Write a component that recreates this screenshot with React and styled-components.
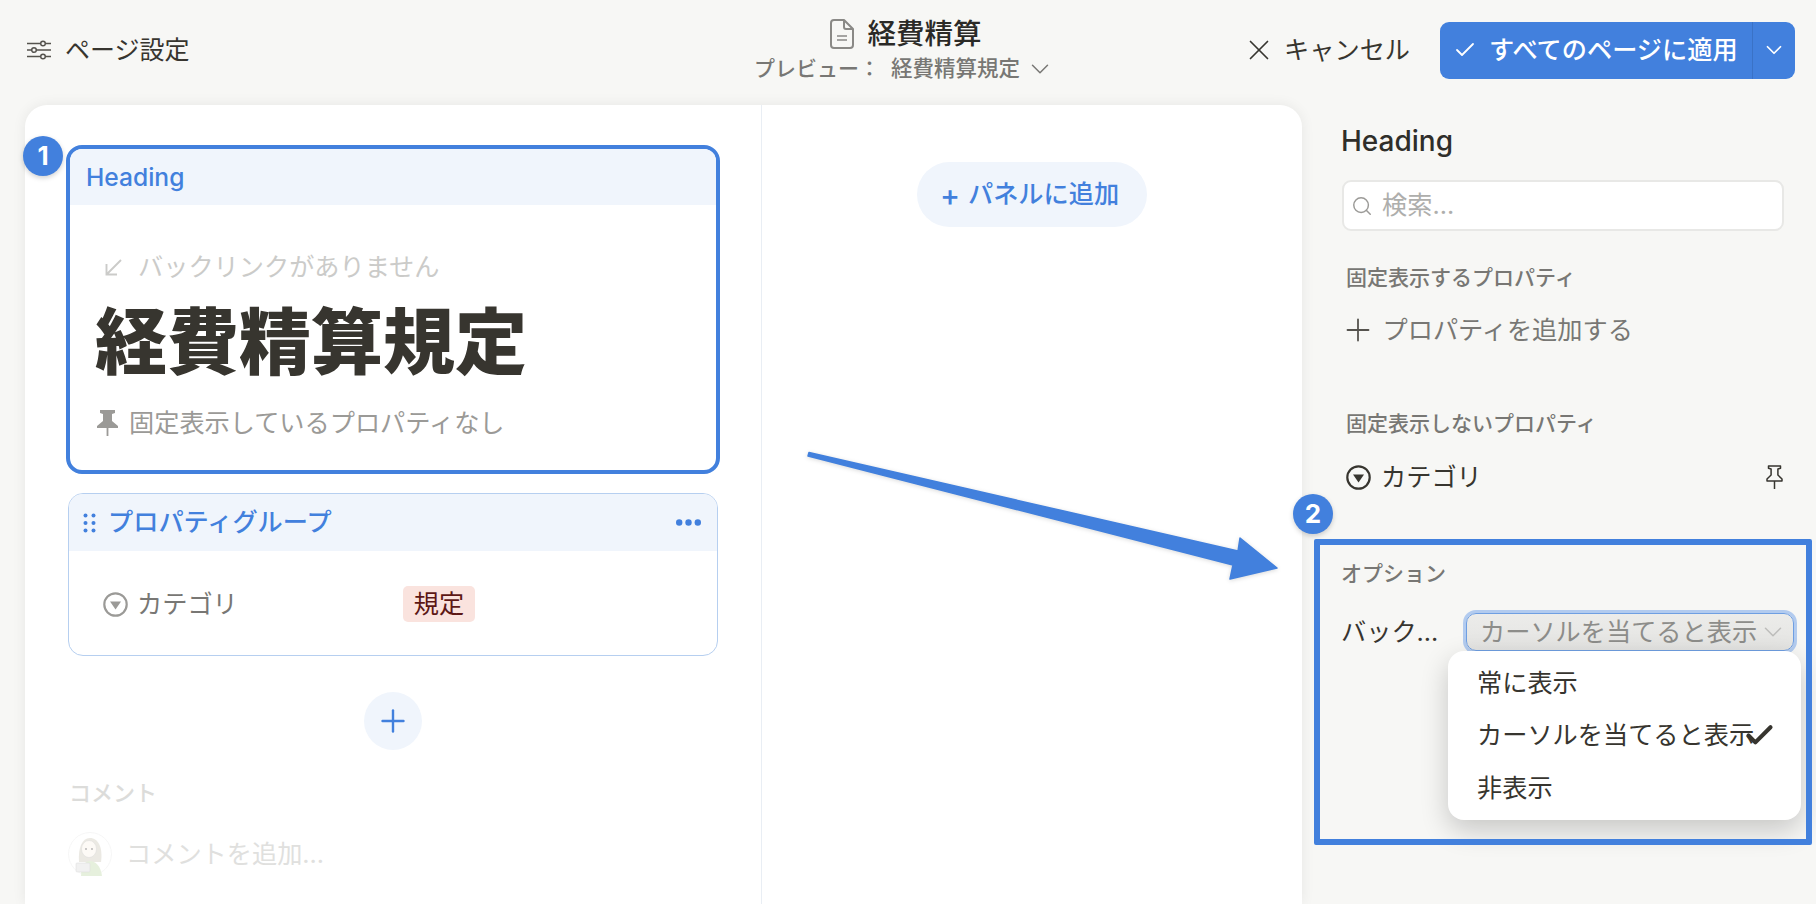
import React from "react";
import styled, { createGlobalStyle } from "styled-components";
import { X, Check, ChevronDown, Plus, Search } from "lucide-react";

const BLUE = "#4280dd";
const INK = "#37352f";
const FONT = `Inter, "Noto Sans CJK JP", "Noto Sans", sans-serif`;

const Global = createGlobalStyle`
  html, body { margin: 0; padding: 0; background: #f7f7f5; }
  body { font-family: ${FONT}; color: ${INK}; font-size: 25.2px; line-height: 1.3; overflow: hidden; }
  * { box-sizing: border-box; }
`;

const Page = styled.div`
  position: relative;
  width: 1816px;
  height: 904px;
  display: flex;
  flex-direction: column;
  overflow: hidden;
  background: #f7f7f5;
`;

/* Header */
const Header = styled.header`
  height: 105px;
  flex: none;
  display: grid;
  grid-template-columns: 1fr auto 1fr;
  align-items: center;
  padding: 0 21px 5px 27px;
`;
const HeaderLeft = styled.div`
  display: flex;
  align-items: center;
  gap: 14px;
  font-size: 25px;
`;
const HeaderCenter = styled.div`
  display: flex;
  flex-direction: column;
  align-items: center;
  gap: 4px;
  margin-right: 13px;
`;
const TitleRow = styled.div`
  display: flex;
  align-items: center;
  gap: 13px;
  height: 34px;
  margin-left: 3px;
`;
const DocTitle = styled.span`
  font-size: 28.5px;
  font-weight: 500;
  color: #2b2a27;
`;
const PreviewRow = styled.div`
  display: flex;
  align-items: center;
  font-size: 21px;
  font-weight: 500;
  color: #787774;
  height: 28px;
  white-space: nowrap;
`;
const PreviewName = styled.span`
  margin-left: 11px;
  font-size: 21.5px;
  margin-right: 5px;
`;
const HeaderRight = styled.div`
  display: flex;
  justify-content: flex-end;
  align-items: center;
`;
const CancelButton = styled.div`
  display: flex;
  align-items: center;
  gap: 8px;
  margin-right: 30px;
  white-space: nowrap;
`;
const ApplyButton = styled.div`
  display: flex;
  align-items: stretch;
  height: 57px;
  width: 355px;
  border-radius: 9px;
  background: ${BLUE};
  color: #fff;
  font-weight: 500;
`;
const ApplyMain = styled.div`
  flex: 1;
  display: flex;
  align-items: center;
  gap: 12px;
  padding-left: 13px;
  white-space: nowrap;
  border-right: 1px solid #3a72c6;
`;
const ApplyCaret = styled.div`
  width: 42px;
  display: flex;
  align-items: center;
  justify-content: center;
`;

/* Body */
const Body = styled.div`
  flex: 1;
  display: flex;
  padding-left: 25px;
  min-height: 0;
`;
const Panel = styled.main`
  width: 1277px;
  flex: none;
  display: flex;
  background: #fff;
  border-radius: 22px 22px 0 0;
  box-shadow: 0 0 14px rgba(0, 0, 0, 0.07);
`;
const LeftColumn = styled.section`
  width: 737px;
  flex: none;
  padding: 40px 41px 0;
  border-right: 1.5px solid #e9eef4;
  overflow: hidden;
`;
const RightColumn = styled.section`
  flex: 1;
  display: flex;
  justify-content: center;
  padding-top: 57px;
  padding-right: 1px;
`;
const AddPanel = styled.div`
  height: 65px;
  width: 230px;
  border-radius: 33px;
  background: #f0f5fc;
  color: ${BLUE};
  font-weight: 500;
  display: flex;
  align-items: center;
  justify-content: center;
  gap: 8px;
  padding-right: 4px;
  white-space: nowrap;
`;
const AddPlusGlyph = styled.span`
  font-size: 30px;
  line-height: 1;
`;

const HeadingCard = styled.div`
  height: 329px;
  border: 4px solid ${BLUE};
  border-radius: 16px;
  overflow: hidden;
`;
const CardHead = styled.div`
  display: flex;
  align-items: center;
  height: ${(p) => p.$h}px;
  background: #f0f5fc;
  color: ${BLUE};
  font-weight: 500;
`;
const HeadingLabel = styled.span`
  margin: 2px 0 0 16px;
  font-size: 24.6px;
`;
const HeadingBody = styled.div`
  padding: 49px 0 0 25px;
`;
const BacklinkRow = styled.div`
  display: flex;
  align-items: center;
  gap: 16px;
  height: 26px;
  padding-left: 10px;
  color: #cbcbc9;
`;
const PageTitle = styled.h1`
  margin: 0;
  margin-top: 19px;
  height: 86px;
  line-height: 86px;
  font-size: 72px;
  font-weight: 900;
  color: ${INK};
  white-space: nowrap;
`;
const PinnedRow = styled.div`
  display: flex;
  align-items: center;
  gap: 11px;
  margin-top: 23px;
  padding-left: 2px;
  height: 30px;
  color: #9b9a97;
`;

const GroupCard = styled.div`
  margin: 19px 2px 0 2px;
  height: 163px;
  border: 1.5px solid #b6cff0;
  border-radius: 15px;
  overflow: hidden;
`;
const DragDots = styled.svg`
  margin-left: 14px;
  margin-right: 12px;
  flex: none;
`;
const GroupTitle = styled.span`
  flex: 1;
  white-space: nowrap;
`;
const MoreDots = styled.svg`
  margin-right: 16px;
  flex: none;
`;
const PropRow = styled.div`
  display: flex;
  align-items: center;
  margin: 35px 0 0 34px;
  height: 36px;
  color: #787774;
`;
const PropName = styled.span`
  width: 266px;
  margin-left: 9px;
`;
const Tag = styled.span`
  width: 72px;
  height: 36px;
  border-radius: 5px;
  background: #fae3de;
  color: #5d1715;
  display: flex;
  align-items: center;
  justify-content: center;
`;

const RoundAdd = styled.div`
  width: 58px;
  height: 58px;
  margin: 36px auto 0;
  border-radius: 50%;
  background: #f0f5fc;
  color: ${BLUE};
  display: flex;
  align-items: center;
  justify-content: center;
`;
const CommentHead = styled.div`
  margin: 29px 0 0 3px;
  height: 28px;
  line-height: 28px;
  font-size: 22px;
  font-weight: 500;
  color: #dcdcda;
`;
const CommentRow = styled.div`
  display: flex;
  align-items: center;
  gap: 14px;
  margin: 25px 0 0 2px;
  color: #e0e0de;
`;
const AvatarSvg = styled.svg`
  opacity: 0.5;
  flex: none;
`;

/* Sidebar */
const Sidebar = styled.aside`
  flex: 1;
  padding: 19px 33px 0 41px;
  position: relative;
`;
const SideTitle = styled.div`
  font-size: 28px;
  font-weight: 500;
  line-height: 34px;
  height: 34px;
  margin-left: -2px;
  color: #2f2e2a;
`;
const SearchBox = styled.div`
  height: 51px;
  margin: 22px -1px 0;
  border: 2px solid #e8e8e6;
  border-radius: 9px;
  background: #fff;
  display: flex;
  align-items: center;
  gap: 9px;
  padding-left: 7px;
  color: #aeaeac;
`;
const SectionLabel = styled.div`
  font-size: 21px;
  font-weight: 500;
  color: #787774;
  line-height: 28px;
  height: 28px;
  margin: ${(p) => p.$mt}px 0 0 ${(p) => p.$ml}px;
  white-space: nowrap;
`;
const SideRow = styled.div`
  display: flex;
  align-items: center;
  gap: ${(p) => p.$gap}px;
  height: 32px;
  margin: ${(p) => p.$mt}px 0 0 3px;
  color: ${(p) => p.$c};
`;
const AddPropPlus = styled(Plus)`
  margin-left: -6.5px;
  flex: none;
  color: #55534e;
`;
const SidePin = styled.svg`
  margin-left: auto;
  flex: none;
`;
const OptionRow = styled.div`
  position: relative;
  display: flex;
  align-items: center;
  margin: 25px -11px 0 -2px;
  height: 38px;
  color: ${INK};
`;
const OptionLabel = styled.span`
  width: 125px;
  flex: none;
`;
const SelectBox = styled.div`
  flex: 1;
  height: 38px;
  border-radius: 10px;
  border: 1.5px solid #6f9fe2;
  box-shadow: 0 0 0 3px #b2cbef;
  background: linear-gradient(#ececea, #e4e4e2);
  color: #8d8d8a;
  display: flex;
  align-items: center;
  justify-content: space-between;
  padding: 0 5px 0 13px;
  white-space: nowrap;
`;
const Menu = styled.div`
  position: absolute;
  left: 107px;
  top: 38px;
  width: 353px;
  height: 169px;
  border-radius: 16px;
  background: #fff;
  box-shadow: 0 10px 28px rgba(0, 0, 0, 0.2);
  display: flex;
  flex-direction: column;
  justify-content: center;
  padding-left: 29px;
  z-index: 2;
`;
const MenuItem = styled.div`
  height: 52.5px;
  display: flex;
  align-items: center;
  white-space: nowrap;
`;
const MenuCheck = styled(Check)`
  margin-left: -11px;
  flex: none;
`;

/* Annotations */
const Badge = styled.div`
  position: absolute;
  left: ${(p) => p.$x}px;
  top: ${(p) => p.$y}px;
  width: 40px;
  height: 40px;
  border-radius: 50%;
  background: ${BLUE};
  color: #fff;
  font-weight: 700;
  font-size: 26px;
  display: flex;
  align-items: center;
  justify-content: center;
  box-shadow: 0 2px 5px rgba(0, 0, 0, 0.18);
  z-index: 5;
`;
const Callout = styled.div`
  position: absolute;
  left: 1314px;
  top: 539px;
  width: 498px;
  height: 306px;
  border: 6px solid ${BLUE};
  border-radius: 2px;
  z-index: 4;
  pointer-events: none;
`;
const ArrowSvg = styled.svg`
  position: absolute;
  left: 0;
  top: 0;
  z-index: 4;
  filter: drop-shadow(0 1px 2px rgba(0, 0, 0, 0.15));
  pointer-events: none;
`;

const Sliders = () => (
  <svg width="24" height="20" viewBox="0 0 24 20" fill="none" stroke="#55534e" strokeWidth="1.5">
    <path d="M0 3.500h13.500M18.500 3.500h5.500M0 10h4.500M9.500 10h14.500M0 16.500h13.500M18.500 16.500h5.500" />
    <circle cx="16" cy="3.500" r="2.300" />
    <circle cx="7" cy="10" r="2.300" />
    <circle cx="16" cy="16.500" r="2.300" />
  </svg>
);
const DocIcon = () => (
  <svg width="24" height="30" viewBox="0 0 24 30" fill="none" stroke="#8a8986" strokeWidth="2" strokeLinejoin="round">
    <path d="M4 1h10l9 9v16a3 3 0 0 1-3 3H4a3 3 0 0 1-3-3V4a3 3 0 0 1 3-3z" />
    <path d="M14 1v7a2 2 0 0 0 2 2h7" />
    <path d="M7 17h10M7 21h10" strokeWidth="1.600" />
  </svg>
);
const BacklinkArrow = () => (
  <svg width="17" height="17" viewBox="0 0 17 17" fill="none" stroke="#cbcbc9" strokeWidth="1.900">
    <path d="M16 1L1.500 15.500M1.500 5v10.500H12" />
  </svg>
);
const SelectCircle = ({ color, size }) => (
  <svg width={size} height={size} viewBox="0 0 25 25" fill="none">
    <circle cx="12.500" cy="12.500" r="11.200" stroke={color} strokeWidth="2.200" />
    <path d="M7 9.500h11l-5.500 8z" fill={color} />
  </svg>
);
const SolidPin = () => (
  <svg width="21" height="26" viewBox="0 0 21 26" fill="#9b9a97">
    <path d="M3 0h15v3l-3 1v7l6 5v2H0v-2l6-5V4L3 3z" />
    <rect x="9.600" y="17" width="1.800" height="9" />
  </svg>
);
const OutlinePin = () => (
  <SidePin width="17" height="24" viewBox="0 0 17 24" fill="none" stroke={INK} strokeWidth="1.500" strokeLinejoin="round">
    <path d="M2.500 1h12v2.200l-2.600.800v6l4.100 4v2H1v-2l4.100-4V4l-2.600-.800z" />
    <path d="M8.500 16v8" />
  </SidePin>
);
const Avatar = () => (
  <AvatarSvg width="44" height="44" viewBox="0 0 44 44">
    <circle cx="22" cy="22" r="21.500" fill="#fff" stroke="#eee" />
    <path d="M11 30c-1-14 3-24 11-24s13 9 11 24z" fill="#d8d4c8" />
    <path d="M13 44c0-10 4-15 9-15s11 5 12 15z" fill="#cfe3bd" />
    <ellipse cx="21" cy="17" rx="7.500" ry="8.500" fill="#fdf6ee" stroke="#bbb" strokeWidth=".5" />
    <circle cx="18" cy="17" r=".9" fill="#666" />
    <circle cx="24" cy="17" r=".9" fill="#666" />
    <rect x="8" y="31" width="14" height="9" rx="1" fill="#e4e4e4" stroke="#bbb" strokeWidth=".5" />
  </AvatarSvg>
);

export default function App() {
  return (
    <Page>
      <Global />
      <Header>
        <HeaderLeft>
          <Sliders />
          <span>ページ設定</span>
        </HeaderLeft>
        <HeaderCenter>
          <TitleRow>
            <DocIcon />
            <DocTitle>経費精算</DocTitle>
          </TitleRow>
          <PreviewRow>
            <span>プレビュー：</span>
            <PreviewName>経費精算規定</PreviewName>
            <ChevronDown size={30} strokeWidth={1.2} />
          </PreviewRow>
        </HeaderCenter>
        <HeaderRight>
          <CancelButton>
            <X size={34} strokeWidth={1.2} />
            <span>キャンセル</span>
          </CancelButton>
          <ApplyButton>
            <ApplyMain>
              <Check size={24} strokeWidth={1.8} />
              <span>すべてのページに適用</span>
            </ApplyMain>
            <ApplyCaret>
              <ChevronDown size={26} strokeWidth={1.6} />
            </ApplyCaret>
          </ApplyButton>
        </HeaderRight>
      </Header>

      <Body>
        <Panel>
          <LeftColumn>
            <HeadingCard>
              <CardHead $h={56}>
                <HeadingLabel>Heading</HeadingLabel>
              </CardHead>
              <HeadingBody>
                <BacklinkRow>
                  <BacklinkArrow />
                  <span>バックリンクがありません</span>
                </BacklinkRow>
                <PageTitle>経費精算規定</PageTitle>
                <PinnedRow>
                  <SolidPin />
                  <span>固定表示しているプロパティなし</span>
                </PinnedRow>
              </HeadingBody>
            </HeadingCard>

            <GroupCard>
              <CardHead $h={57}>
                <DragDots width="13" height="20" viewBox="0 0 13 20" fill={BLUE}>
                  <circle cx="2.500" cy="2.500" r="2" />
                  <circle cx="10.500" cy="2.500" r="2" />
                  <circle cx="2.500" cy="10" r="2" />
                  <circle cx="10.500" cy="10" r="2" />
                  <circle cx="2.500" cy="17.500" r="2" />
                  <circle cx="10.500" cy="17.500" r="2" />
                </DragDots>
                <GroupTitle>プロパティグループ</GroupTitle>
                <MoreDots width="25" height="7" viewBox="0 0 25 7" fill={BLUE}>
                  <circle cx="3.200" cy="3.500" r="3.200" />
                  <circle cx="12.500" cy="3.500" r="3.200" />
                  <circle cx="21.800" cy="3.500" r="3.200" />
                </MoreDots>
              </CardHead>
              <PropRow>
                <SelectCircle color="#9b9a97" size={25} />
                <PropName>カテゴリ</PropName>
                <Tag>規定</Tag>
              </PropRow>
            </GroupCard>

            <RoundAdd>
              <Plus size={36} strokeWidth={1.6} />
            </RoundAdd>
            <CommentHead>コメント</CommentHead>
            <CommentRow>
              <Avatar />
              <span>コメントを追加...</span>
            </CommentRow>
          </LeftColumn>
          <RightColumn>
            <AddPanel>
              <AddPlusGlyph>+</AddPlusGlyph>
              <span>パネルに追加</span>
            </AddPanel>
          </RightColumn>
        </Panel>

        <Sidebar>
          <SideTitle>Heading</SideTitle>
          <SearchBox>
            <Search size={22} strokeWidth={1.6} color="#9b9a97" />
            <span>検索...</span>
          </SearchBox>
          <SectionLabel $mt={33} $ml={3}>固定表示するプロパティ</SectionLabel>
          <SideRow $mt={22} $gap={7} $c="#787774">
            <AddPropPlus size={36} strokeWidth={1.2} />
            <span>プロパティを追加する</span>
          </SideRow>
          <SectionLabel $mt={64} $ml={3}>固定表示しないプロパティ</SectionLabel>
          <SideRow $mt={23} $gap={10} $c={INK}>
            <SelectCircle color={INK} size={25} />
            <span>カテゴリ</span>
            <OutlinePin />
          </SideRow>
          <SectionLabel $mt={67} $ml={-2}>オプション</SectionLabel>
          <OptionRow>
            <OptionLabel>バック...</OptionLabel>
            <SelectBox>
              <span>カーソルを当てると表示</span>
              <ChevronDown size={30} strokeWidth={1.2} color="#bdbdbb" />
            </SelectBox>
            <Menu>
              <MenuItem>常に表示</MenuItem>
              <MenuItem>
                カーソルを当てると表示
                <MenuCheck size={33} strokeWidth={3} />
              </MenuItem>
              <MenuItem>非表示</MenuItem>
            </Menu>
          </OptionRow>
        </Sidebar>
      </Body>

      <ArrowSvg width="1816" height="904" viewBox="0 0 1816 904">
        <path
          d="M809 452.500L1238 551L1240 538L1277 568L1230 579L1233 565L808 456z"
          fill={BLUE}
          stroke={BLUE}
          strokeWidth="1.500"
          strokeLinejoin="round"
        />
      </ArrowSvg>
      <Badge $x={23} $y={136}>1</Badge>
      <Badge $x={1293} $y={494}>2</Badge>
      <Callout />
    </Page>
  );
}
